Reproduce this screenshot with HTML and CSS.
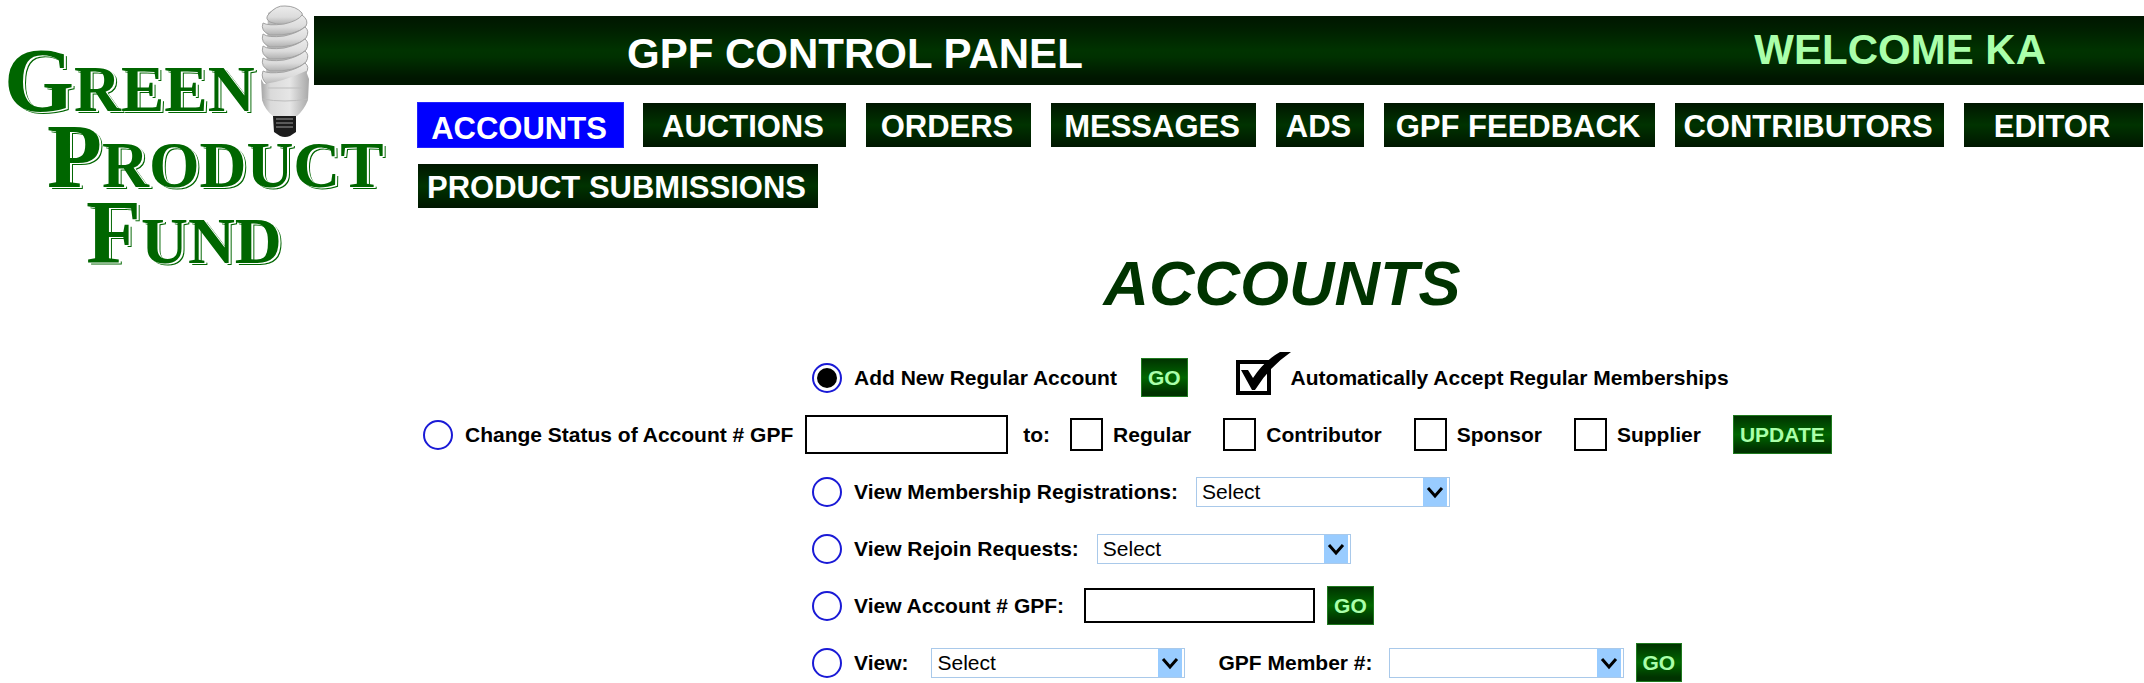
FILE: index.html
```html
<!DOCTYPE html>
<html lang="en">
<head>
  <meta charset="UTF-8">
  <meta name="viewport" content="width=device-width, initial-scale=1.0">
  <title>GPF Control Panel - Accounts</title>
  <link rel="stylesheet" href="styles.css">
</head>
<body>
  <div class="page">
    <a class="logo" href="#">
      <span class="logo-line">Green</span>
      <span class="logo-line logo-line-2">Product</span>
      <span class="logo-line logo-line-3">Fund</span>
      <svg class="bulb" width="50" height="132" viewBox="0 0 50 132" aria-hidden="true">
        <defs>
          <linearGradient id="glass" x1="0" x2="1" y1="0" y2="0">
            <stop offset="0" stop-color="#a4a4a4"/>
            <stop offset="0.2" stop-color="#dadada"/>
            <stop offset="0.6" stop-color="#e6e6e6"/>
            <stop offset="1" stop-color="#a8a8a8"/>
          </linearGradient>
          <linearGradient id="tube" x1="0" x2="0" y1="0" y2="1">
            <stop offset="0" stop-color="#ececec"/>
            <stop offset="0.6" stop-color="#dcdcdc"/>
            <stop offset="1" stop-color="#b0b0b0"/>
          </linearGradient>
        </defs>
        <path d="M8 8Q16 2 24 1Q36 2 42 8V72H6Z" fill="#bdbdbd"/>
        <g fill="url(#tube)" stroke="#a2a2a2" stroke-width="1">
          <path d="M8 10Q16 0 25 1Q36 1 42 8Q44 15 38 17Q22 22 10 17Q5 14 8 10Z"/>
          <path d="M3 18Q8 21 24 19Q38 16 42 10Q49 15 46 21Q36 31 10 30Q0 26 3 18Z"/>
          <path d="M3 29Q8 33 24 31Q38 28 45 22Q50 26 46 33Q36 43 10 42Q0 38 3 29Z"/>
          <path d="M3 41Q8 45 24 43Q38 40 45 34Q50 38 46 45Q36 55 10 54Q0 50 3 41Z"/>
          <path d="M3 53Q8 57 24 55Q38 52 45 46Q50 50 46 57Q36 67 10 66Q0 62 3 53Z"/>
          <path d="M3 66Q8 69 24 67Q38 64 45 58Q50 62 46 68Q36 77 8 80Q0 74 3 66Z"/>
        </g>
        <path d="M1 74L4 79Q22 77 46 66L49 74L48 95Q44 105 37 111H13Q5 105 2 95Z" fill="url(#glass)"/>
        <path d="M2 94Q25 98 48 94M8 83H42" fill="none" stroke="#bdbdbd"/>
        <path d="M13 111H36V127L30 131Q25 133 20 131L14 127Z" fill="#1c1c1c"/>
        <path d="M16 114H33M16 118H33M16 122H33" stroke="#999" stroke-width="1"/>
      </svg>
    </a>

    <div class="panel">
      <header class="topbar">
        <span class="topbar-title">GPF CONTROL PANEL</span>
        <span class="topbar-user">WELCOME KA</span>
      </header>

      <nav class="nav">
        <a class="nav-link active" href="#">ACCOUNTS</a>
        <a class="nav-link" href="#">AUCTIONS</a>
        <a class="nav-link" href="#">ORDERS</a>
        <a class="nav-link" href="#">MESSAGES</a>
        <a class="nav-link" href="#">ADS</a>
        <a class="nav-link" href="#">GPF FEEDBACK</a>
        <a class="nav-link" href="#">CONTRIBUTORS</a>
        <a class="nav-link" href="#">EDITOR</a>
        <a class="nav-link nav-wide" href="#">PRODUCT SUBMISSIONS</a>
      </nav>

      <main>
        <h1>ACCOUNTS</h1>

        <form class="actions">
          <div class="row">
            <input class="radio" type="radio" name="action" id="add" checked>
            <label for="add">Add New Regular Account</label>
            <button class="btn btn-add" type="button">GO</button>
            <span class="auto">
              <input class="auto-check" type="checkbox" id="auto" checked>
              <svg class="tick" width="52" height="42" viewBox="0 0 52 42" aria-hidden="true">
                <path d="M2 18H9L14 26Q25 9 41 0H52Q30 15 16 38H13Z" fill="#000"/>
              </svg>
            </span>
            <label for="auto">Automatically Accept Regular Memberships</label>
          </div>

          <div class="row row-wide">
            <input class="radio" type="radio" name="action" id="change">
            <label for="change">Change Status of Account # GPF</label>
            <input class="text text-status" type="text" aria-label="Account number">
            <span class="to">to:</span>
            <span class="option"><input class="check" type="checkbox" id="regular"><label for="regular">Regular</label></span>
            <span class="option"><input class="check" type="checkbox" id="contributor"><label for="contributor">Contributor</label></span>
            <span class="option"><input class="check" type="checkbox" id="sponsor"><label for="sponsor">Sponsor</label></span>
            <span class="option"><input class="check" type="checkbox" id="supplier"><label for="supplier">Supplier</label></span>
            <button class="btn btn-update" type="button">UPDATE</button>
          </div>

          <div class="row">
            <input class="radio" type="radio" name="action" id="registrations">
            <label for="registrations">View Membership Registrations:</label>
            <span class="select">
              <select aria-label="Membership registrations"><option>Select</option></select>
              <svg class="arrow" width="24" height="28" viewBox="0 0 24 28" aria-hidden="true"><path d="M5 10L12 18L19 10" fill="none" stroke="#000" stroke-width="3"/></svg>
            </span>
          </div>

          <div class="row">
            <input class="radio" type="radio" name="action" id="rejoin">
            <label for="rejoin">View Rejoin Requests:</label>
            <span class="select">
              <select aria-label="Rejoin requests"><option>Select</option></select>
              <svg class="arrow" width="24" height="28" viewBox="0 0 24 28" aria-hidden="true"><path d="M5 10L12 18L19 10" fill="none" stroke="#000" stroke-width="3"/></svg>
            </span>
          </div>

          <div class="row">
            <input class="radio" type="radio" name="action" id="account">
            <label for="account">View Account # GPF:</label>
            <input class="text text-account" type="text" aria-label="GPF account number">
            <button class="btn" type="button">GO</button>
          </div>

          <div class="row">
            <input class="radio" type="radio" name="action" id="view">
            <label for="view">View:</label>
            <span class="select select-view">
              <select aria-label="View"><option>Select</option></select>
              <svg class="arrow" width="24" height="28" viewBox="0 0 24 28" aria-hidden="true"><path d="M5 10L12 18L19 10" fill="none" stroke="#000" stroke-width="3"/></svg>
            </span>
            <label class="member" for="member">GPF Member #:</label>
            <span class="select select-member">
              <select id="member"><option></option></select>
              <svg class="arrow" width="24" height="28" viewBox="0 0 24 28" aria-hidden="true"><path d="M5 10L12 18L19 10" fill="none" stroke="#000" stroke-width="3"/></svg>
            </span>
            <button class="btn" type="button">GO</button>
          </div>
        </form>
      </main>
    </div>
  </div>
</body>
</html>
```

FILE: styles.css
```css
* {
  box-sizing: border-box;
}
body {
  margin: 0;
  background: #fff;
  color: #000;
  font-family: "Liberation Sans", Arial, sans-serif;
  font-size: 21px;
}
.page {
  display: flex;
  align-items: flex-start;
}

/* logo */
.logo {
  position: relative;
  flex: none;
  width: 314px;
  padding: 43px 0 0 4px;
  color: #006600;
  font-family: "Liberation Serif", "Times New Roman", serif;
  font-weight: bold;
  text-transform: uppercase;
  text-decoration: none;
  text-shadow: 2px 1px 0 #fff, 3px 2px 0 #006600;
  white-space: nowrap;
}
.logo-line {
  display: block;
  height: 76px;
  font-size: 65px;
  line-height: 76px;
}
.logo-line::first-letter {
  font-size: 90px;
  line-height: 76px;
}
.logo-line-2 {
  padding-left: 43px;
}
.logo-line-3 {
  padding-left: 82px;
}
.bulb {
  position: absolute;
  left: 260px;
  top: 5px;
}

/* top bar and navigation */
.panel {
  flex: 1;
  min-width: 0;
  padding-top: 16px;
}
.topbar {
  display: flex;
  justify-content: space-between;
  height: 69px;
  padding: 0 98px 0 313px;
  background: linear-gradient(#001600, #002000 20%, #003300 50%, #003000 60%, #001600 90%, #001600);
  color: #fff;
  font-size: 42px;
  font-weight: bold;
  line-height: 75px;
}
.topbar-user {
  color: #aaffaa;
  line-height: 67px;
}
.nav {
  display: grid;
  grid-template-columns: 205px 203px 165px 205px 88px 271px 269px 1fr;
  gap: 17px 20px;
  margin: 18px 1px 0 104px;
}
.nav-link {
  height: 44px;
  padding-right: 3px;
  background: linear-gradient(#001600, #003300 50%, #001600);
  color: #fff;
  font-size: 31px;
  font-weight: bold;
  line-height: 48px;
  text-align: center;
  text-decoration: none;
  white-space: nowrap;
}
.nav-link.active {
  background: #0000ff;
  box-shadow: 0 0 0 1px #2222ff;
  line-height: 51px;
}
.nav-wide {
  grid-column: span 3;
  width: 400px;
}

/* account actions */
main {
  margin-left: 103px;
}
h1 {
  margin: 35px 0 0;
  padding-left: 3px;
  color: #003300;
  font-size: 63px;
  font-style: italic;
  line-height: 80px;
  text-align: center;
}
.actions {
  display: flex;
  flex-direction: column;
  gap: 18px;
  margin-top: 35px;
}
.row {
  display: flex;
  align-items: center;
  height: 39px;
  padding-left: 395px;
  font-weight: bold;
  white-space: nowrap;
}
.row-wide {
  padding-left: 6px;
}
.radio {
  appearance: none;
  flex: none;
  width: 30px;
  height: 30px;
  margin: 0 12px 0 0;
  padding: 3px;
  border: 2px solid #1a1ad6;
  border-radius: 50%;
}
.radio:checked {
  background: #000 content-box;
}
.btn {
  height: 39px;
  margin-left: 12px;
  padding: 0 6px;
  border: 1px solid #1f7a1f;
  background: linear-gradient(#003300, #006600 50%, #003300 90%);
  color: #aaffaa;
  font: bold 21px "Liberation Sans", Arial, sans-serif;
}
.btn-add {
  margin-left: 24px;
}
.btn-update {
  margin-left: 0;
}
.auto {
  position: relative;
  margin: 0 20px 0 48px;
  height: 35px;
}
.auto-check {
  appearance: none;
  width: 35px;
  height: 35px;
  margin: 0;
  border: 4px solid #000;
}
.tick {
  position: absolute;
  left: 3px;
  top: -8px;
}
.text {
  border: 2px solid #000;
  font: 21px "Liberation Sans", Arial, sans-serif;
}
.text-status {
  width: 203px;
  height: 39px;
  margin: 0 15px 0 12px;
}
.text-account {
  width: 231px;
  height: 35px;
  margin-left: 20px;
}
.to {
  margin-right: 20px;
}
.option {
  display: flex;
  align-items: center;
  margin-right: 32px;
}
.check {
  appearance: none;
  width: 33px;
  height: 33px;
  margin: 0 10px 0 0;
  border: 2px solid #000;
}
.select {
  position: relative;
  width: 254px;
  height: 30px;
  margin-left: 18px;
}
.select select {
  appearance: none;
  width: 100%;
  height: 30px;
  padding: 0 30px 0 5px;
  border: 1px solid #a9c9ea;
  border-radius: 0;
  background: #fff;
  color: #000;
  font: 21px "Liberation Sans", Arial, sans-serif;
}
.arrow {
  position: absolute;
  top: 1px;
  right: 3px;
  background: #99ccff;
  pointer-events: none;
}
.select-view {
  margin-left: 23px;
}
.member {
  margin-left: 33px;
}
.select.select-member {
  width: 235px;
  margin-left: 16px;
}
```
